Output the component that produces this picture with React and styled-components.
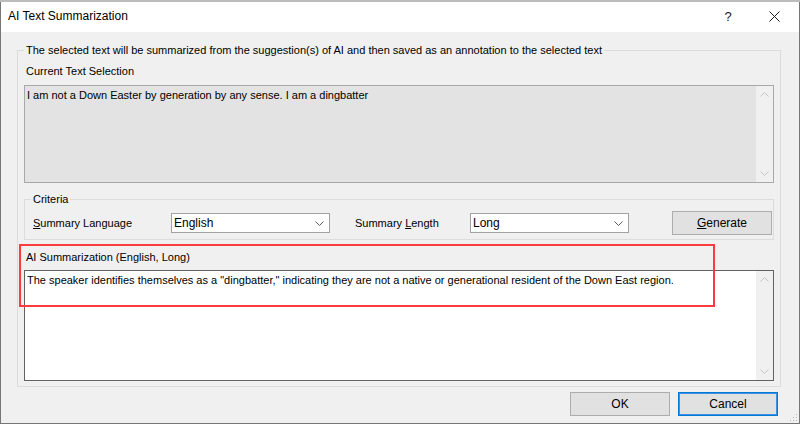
import React from "react";
import styled, { createGlobalStyle } from "styled-components";

const GlobalStyle = createGlobalStyle`
  html, body {
    margin: 0;
    padding: 0;
    background: #bcbcbc;
  }
  body {
    font-family: "Liberation Sans", Arial, sans-serif;
    font-size: 11px;
    color: #000;
  }
  #root {
    width: 800px;
    height: 424px;
    overflow: hidden;
  }
`;

const Screen = styled.div`
  height: 424px;
  padding-top: 2px;
  box-sizing: border-box;
`;

const Window = styled.div`
  position: relative;
  height: 422px;
  box-sizing: border-box;
  border: 1px solid #767676;
  border-top: none;
  background: #f0f0f0;
  display: flex;
  flex-direction: column;
`;

const TitleBar = styled.div`
  height: 30px;
  background: #fff;
  display: flex;
  align-items: center;
  padding: 0 2px 2px 7px;
  box-sizing: border-box;
`;

const Title = styled.div`
  flex: 1;
  font-size: 12px;
`;

const CaptionButton = styled.div`
  width: 46px;
  height: 28px;
  display: flex;
  align-items: center;
  justify-content: center;
  font-size: 13px;
  color: #1a1a1a;
`;

const Group = styled.fieldset`
  margin: 12px 18px 0 16px;
  padding: 8px 6px 5px 6px;
  border: 1px solid #dcdcdc;
  min-width: 0;
`;

const Legend = styled.legend`
  padding: 0 2px;
  margin-left: ${(p) => p.$indent || 0}px;
  line-height: 13px;
`;

const FieldLabel = styled.div`
  line-height: 13px;
  padding-left: 2px;
  margin-top: ${(p) => p.$top || 0}px;
`;

const TextBox = styled.div`
  display: flex;
  height: ${(p) => p.$h}px;
  margin-top: ${(p) => p.$top || 0}px;
  box-sizing: border-box;
  border: 1px solid ${(p) => (p.$disabled ? "#a8a8a8" : "#626262")};
  background: ${(p) => (p.$disabled ? "#e3e3e3" : "#fff")};
`;

const TextBody = styled.div`
  flex: 1;
  padding: 3px 2px;
  line-height: 13px;
`;

const ScrollBar = styled.div`
  width: 17px;
  background: #f0f0f0;
  display: flex;
  flex-direction: column;
  justify-content: space-between;
`;

const ArrowCell = styled.div`
  height: 17px;
  display: flex;
  align-items: center;
  justify-content: center;
`;

const Criteria = styled.fieldset`
  margin: 10px 0 0 0;
  padding: 5px 1px 4px 6px;
  border: 1px solid #dcdcdc;
  min-width: 0;
`;

const CriteriaRow = styled.div`
  display: flex;
  align-items: center;
  margin-left: 2px;
`;

const RowLabel = styled.div`
  width: ${(p) => p.$w}px;
  margin-left: ${(p) => p.$left || 0}px;
`;

const Combo = styled.div`
  width: 159px;
  height: 20px;
  box-sizing: border-box;
  border: 1px solid #a2a2a2;
  background: #fff;
  display: flex;
  align-items: center;
  padding: 0 5px 0 2px;
  font-size: 12px;
`;

const ComboText = styled.span`
  flex: 1;
`;

const Spacer = styled.div`
  flex: 1;
`;

const Button = styled.div`
  width: 100px;
  height: 24px;
  box-sizing: border-box;
  background: #e1e1e1;
  border: 1px solid ${(p) => (p.$default ? "#0078d7" : "#adadad")};
  box-shadow: ${(p) => (p.$default ? "inset 0 0 0 1px #3d94dc" : "none")};
  display: flex;
  align-items: center;
  justify-content: center;
  font-size: 12px;
`;

const SummarySection = styled.div`
  position: relative;
  margin-top: 11px;
`;

const Highlight = styled.div`
  position: absolute;
  left: -5px;
  top: -7px;
  width: 696px;
  height: 63px;
  box-sizing: border-box;
  border: 2px solid #fa3c3c;
  pointer-events: none;
`;

const ButtonRow = styled.div`
  display: flex;
  justify-content: flex-end;
  gap: 8px;
  margin-top: 5px;
  padding-right: 21px;
`;

const Grip = styled.svg`
  position: absolute;
  right: 1px;
  bottom: 1px;
`;

const Chevron = ({ up, color = "#c4c4c4" }) => (
  <svg width="9" height="5" viewBox="0 0 9 5">
    <polyline
      points={up ? "0.5,4.5 4.5,0.5 8.5,4.5" : "0.5,0.5 4.5,4.5 8.5,0.5"}
      fill="none"
      stroke={color}
      strokeWidth="1"
    />
  </svg>
);

const Scroll = () => (
  <ScrollBar>
    <ArrowCell>
      <Chevron up />
    </ArrowCell>
    <ArrowCell>
      <Chevron />
    </ArrowCell>
  </ScrollBar>
);

const ComboBox = ({ value }) => (
  <Combo>
    <ComboText>{value}</ComboText>
    <Chevron color="#5a5a5a" />
  </Combo>
);

export default function App() {
  return (
    <Screen>
      <GlobalStyle />
      <Window>
        <TitleBar>
          <Title>AI Text Summarization</Title>
          <CaptionButton>?</CaptionButton>
          <CaptionButton>
            <svg width="11" height="11" viewBox="0 0 11 11">
              <path d="M0.5 0.5 L10.5 10.5 M10.5 0.5 L0.5 10.5" stroke="#1a1a1a" strokeWidth="1" />
            </svg>
          </CaptionButton>
        </TitleBar>

        <Group>
          <Legend>
            The selected text will be summarized from the suggestion(s) of AI and then saved as an annotation to the
            selected text
          </Legend>
          <FieldLabel>Current Text Selection</FieldLabel>
          <TextBox $h={98} $top={7} $disabled>
            <TextBody>I am not a Down Easter by generation by any sense. I am a dingbatter</TextBody>
            <Scroll />
          </TextBox>

          <Criteria>
            <Legend>Criteria</Legend>
            <CriteriaRow>
              <RowLabel $w={138}>
                <u>S</u>ummary Language
              </RowLabel>
              <ComboBox value="English" />
              <RowLabel $w={115} $left={25}>
                Summary <u>L</u>ength
              </RowLabel>
              <ComboBox value="Long" />
              <Spacer />
              <Button>
                <u>G</u>enerate
              </Button>
            </CriteriaRow>
          </Criteria>

          <SummarySection>
            <FieldLabel>AI Summarization (English, Long)</FieldLabel>
            <TextBox $h={111} $top={6}>
              <TextBody>
                The speaker identifies themselves as a "dingbatter," indicating they are not a native or generational
                resident of the Down East region.
              </TextBody>
              <Scroll />
            </TextBox>
            <Highlight />
          </SummarySection>
        </Group>

        <ButtonRow>
          <Button>OK</Button>
          <Button $default>Cancel</Button>
        </ButtonRow>

        <Grip width="8" height="8" viewBox="0 0 8 8">
          <rect x="6" y="0" width="1" height="1" fill="#b5b5b5" />
          <rect x="3" y="3" width="1" height="1" fill="#b5b5b5" />
          <rect x="6" y="3" width="1" height="1" fill="#b5b5b5" />
          <rect x="0" y="6" width="1" height="1" fill="#b5b5b5" />
          <rect x="3" y="6" width="1" height="1" fill="#b5b5b5" />
          <rect x="6" y="6" width="1" height="1" fill="#b5b5b5" />
        </Grip>
      </Window>
    </Screen>
  );
}
